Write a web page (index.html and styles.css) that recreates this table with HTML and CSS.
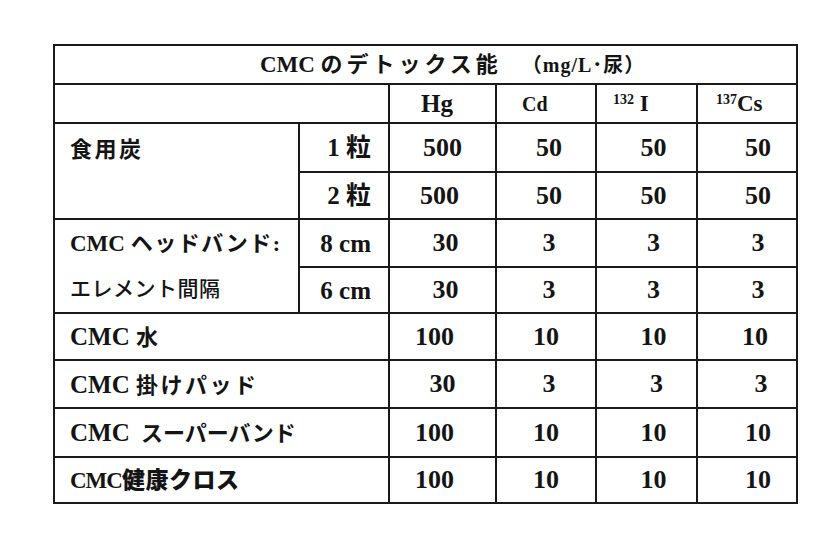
FILE: index.html
```html
<!DOCTYPE html>
<html lang="ja">
<head>
<meta charset="utf-8">
<title>CMC のデトックス能</title>
<link rel="stylesheet" href="styles.css">
</head>
<body>
<table class="detox">
  <colgroup>
    <col class="w-label">
    <col class="w-sub">
    <col class="w-hg">
    <col class="w-cd">
    <col class="w-i">
    <col class="w-cs">
  </colgroup>
  <tr class="r-title">
    <td colspan="6" class="title"><span class="t-lat">CMC</span> <span class="t-ja">のデトックス能</span><span class="t-unit">（mg/L･尿）</span></td>
  </tr>
  <tr class="r-head">
    <td colspan="2"></td>
    <td class="h-hg">Hg</td>
    <td class="h-cd">Cd</td>
    <td class="h-i"><sup>132</sup> I</td>
    <td class="h-cs"><sup>137</sup>Cs</td>
  </tr>
  <tr class="r1">
    <td rowspan="2" class="label top"><span class="ja sp3">食用炭</span></td>
    <td class="sub">1 粒</td>
    <td class="num c3">500</td>
    <td class="num c4">50</td>
    <td class="num c5">50</td>
    <td class="num c6">50</td>
  </tr>
  <tr class="r2">
    <td class="sub">2 粒</td>
    <td class="num c3 s-l">500</td>
    <td class="num c4">50</td>
    <td class="num c5">50</td>
    <td class="num c6">50</td>
  </tr>
  <tr class="r3">
    <td class="label band1 small-lat">CMC <span class="ja sp2">ヘッドバンド:</span></td>
    <td class="sub">8 cm</td>
    <td class="num c3 s-r">30</td>
    <td class="num c4">3</td>
    <td class="num c5">3</td>
    <td class="num c6">3</td>
  </tr>
  <tr class="r4">
    <td class="label band2">エレメント間隔</td>
    <td class="sub">6 cm</td>
    <td class="num c3 s-r">30</td>
    <td class="num c4">3</td>
    <td class="num c5">3</td>
    <td class="num c6">3</td>
  </tr>
  <tr class="r5">
    <td colspan="2" class="label">CMC <span class="ja">水</span></td>
    <td class="num c3 s-ll">100</td>
    <td class="num c4 s-l">10</td>
    <td class="num c5">10</td>
    <td class="num c6 s-l">10</td>
  </tr>
  <tr class="r6">
    <td colspan="2" class="label">CMC <span class="ja sp3">掛けパッド</span></td>
    <td class="num c3">30</td>
    <td class="num c4">3</td>
    <td class="num c5 s-r">3</td>
    <td class="num c6 s-r">3</td>
  </tr>
  <tr class="r7">
    <td colspan="2" class="label">CMC <span class="ja sp0 gap">スーパーバンド</span></td>
    <td class="num c3 s-ll">100</td>
    <td class="num c4 s-l">10</td>
    <td class="num c5">10</td>
    <td class="num c6">10</td>
  </tr>
  <tr class="r8">
    <td colspan="2" class="label heavy small-lat"><span class="tight">CMC</span><span class="ja sp1">健康クロス</span></td>
    <td class="num c3 s-ll">100</td>
    <td class="num c4 s-l">10</td>
    <td class="num c5">10</td>
    <td class="num c6">10</td>
  </tr>
</table>
</body>
</html>
```

FILE: styles.css
```css
html, body {
  margin: 0;
  padding: 0;
  background: #ffffff;
}

body {
  width: 828px;
  height: 536px;
  padding: 44px 0 0 53px;
  box-sizing: border-box;
  font-family: "Liberation Serif", "Noto Sans CJK JP", serif;
  font-weight: 700;
  color: #141414;
}

.detox {
  border-collapse: collapse;
  table-layout: fixed;
  width: 745px;
}

.detox td {
  border: 2px solid #1a1a1a;
  padding: 0;
  vertical-align: middle;
  white-space: nowrap;
  line-height: 1;
}

.w-label { width: 245px; }
.w-sub { width: 90px; }
.w-hg { width: 107px; }
.w-cd { width: 100px; }
.w-i { width: 101px; }
.w-cs { width: 100px; }

.r-title { height: 39px; }
.r-head { height: 39px; }
.r1 { height: 49px; }
.r2 { height: 47px; }
.r3 { height: 48px; }
.r4 { height: 46px; }
.r5 { height: 47px; }
.r6 { height: 48px; }
.r7 { height: 49px; }
.r8 { height: 46px; }

/* Title */
.detox td.title {
  text-align: left;
  padding-left: 205px;
  font-size: 22px;
}

.t-lat {
  font-size: 23px;
}

.t-ja {
  font-size: 22px;
  letter-spacing: 4px;
}

.t-unit {
  font-size: 20px;
  letter-spacing: 1px;
  margin-left: 20px;
}

/* Header */
.detox td.h-hg {
  font-size: 25px;
  text-align: left;
  padding-left: 31px;
}

.detox td.h-cd {
  font-size: 20px;
  text-align: left;
  padding-left: 25px;
}

.detox td.h-i {
  font-size: 23px;
  text-align: left;
  padding-left: 16px;
}

.detox td.h-cs {
  font-size: 23px;
  text-align: left;
  padding-left: 18px;
}

.detox sup {
  font-size: 14px;
  vertical-align: 7px;
  line-height: 0;
}

/* Labels */
.detox td.label {
  font-size: 25px;
  padding-left: 15px;
  text-align: left;
}

.detox td.small-lat {
  font-size: 23px;
}

.ja {
  font-size: 22px;
}

.sp0 { letter-spacing: 0; }
.sp1 { letter-spacing: 0.5px; }
.sp2 { letter-spacing: 1.5px; }
.sp3 { letter-spacing: 2.5px; }

.gap {
  margin-left: 5px;
}

.detox td.top {
  vertical-align: top;
  padding-top: 12px;
}

.detox td.band1 {
  border-bottom-style: hidden;
}

.detox td.band2 {
  font-weight: 500;
  font-size: 21px;
  letter-spacing: 0.5px;
}

.detox td.heavy {
  font-weight: 900;
}

.tight {
  letter-spacing: -1px;
}

.heavy .ja {
  font-size: 23px;
}

/* Sub column */
.detox td.sub {
  font-size: 25px;
  text-align: right;
  padding-right: 17px;
}

/* Numbers */
.detox td.num {
  font-size: 26px;
  text-align: center;
}

.detox td.c4 { padding-left: 6px; }
.detox td.c5 { padding-left: 14px; }
.detox td.c6 { padding-left: 22px; }

.s-l { text-indent: -6px; }
.s-ll { text-indent: -16px; }
.s-r { text-indent: 6px; }
```
